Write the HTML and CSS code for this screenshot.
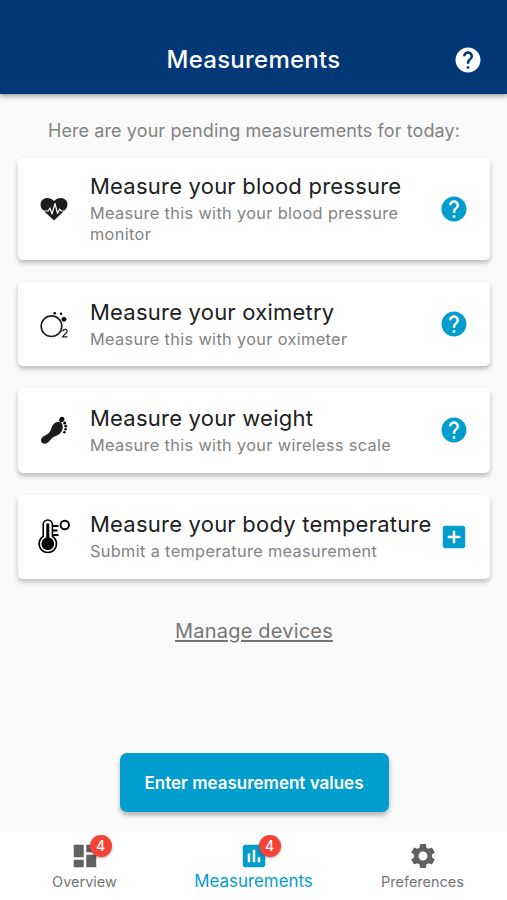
FILE: index.html
```html
<!DOCTYPE html>
<html lang="en">
<head>
  <meta charset="UTF-8">
  <meta name="viewport" content="width=device-width, initial-scale=1.0">
  <title>Measurements</title>
  <link rel="stylesheet" href="styles.css">
</head>
<body>

<!-- shared icons -->
<svg class="symbols" width="0" height="0">
  <symbol id="help" viewBox="0 0 24 24">
    <path d="M12 2C6.48 2 2 6.48 2 12s4.480 10 10 10 10-4.480 10-10S17.520 2 12 2zm1 17h-2v-2h2v2zm2.070-7.750l-.9.920C13.450 12.900 13 13.500 13 15h-2v-.5c0-1.100.45-2.100 1.170-2.830l1.240-1.260c.37-.36.59-.86.59-1.410 0-1.100-.9-2-2-2s-2 .9-2 2H8c0-2.210 1.790-4 4-4s4 1.790 4 4c0 .88-.36 1.680-.93 2.250z"/>
  </symbol>
</svg>

<header>
  <h1>Measurements</h1>
  <svg class="icon"><use href="#help"/></svg>
</header>

<main>
  <p class="intro">Here are your pending measurements for today:</p>

  <div class="cards">
    <div class="card">
      <svg class="type" viewBox="0 0 36 36">
        <path fill="#1c1c1c" d="M18 29.500L6.800 19C3.500 15.300 4 10.500 7.200 8.300c3.500-2.400 8-1.200 10.800 1.700 2.800-2.900 7.300-4.100 10.800-1.700 3.200 2.200 3.700 7 .4 10.700z"/>
        <path fill="none" stroke="#fff" stroke-width="1.200" stroke-linejoin="round" d="M5 20h7l2-3 2 6 3-10.500 2.500 10 2.200-4.500 1.500 2H31"/>
      </svg>
      <div class="text">
        <h2>Measure your blood pressure</h2>
        <p>Measure this with your blood pressure monitor</p>
      </div>
      <svg class="icon"><use href="#help"/></svg>
    </div>

    <div class="card">
      <svg class="type" viewBox="0 0 36 36">
        <circle cx="15.500" cy="20.200" r="10.300" fill="none" stroke="#222" stroke-width="1.700"/>
        <circle cx="18.700" cy="7.200" r="1.300"/>
        <circle cx="25" cy="7.700" r="1.200"/>
        <circle cx="28" cy="13.300" r="2.400"/>
        <path fill="none" stroke="#222" stroke-width="1.300" d="M26.800 25.500c.2-3 4.500-2.800 4.300 0-.1 1.700-3.700 3.700-4.500 5.300h5"/>
      </svg>
      <div class="text">
        <h2>Measure your oximetry</h2>
        <p>Measure this with your oximeter</p>
      </div>
      <svg class="icon"><use href="#help"/></svg>
    </div>

    <div class="card">
      <svg class="type" viewBox="0 0 36 36">
        <path fill="#1c1c1c" d="M5.700 26c1.500-2.400 5-2.800 7.600-5.600 2-2.200 1.800-5.400 4-8 2.500-3 6.500-3.400 8.400-1.200 2.200 3 .8 7.900-1.800 10.400-2.200 2.200-6 2.700-8.300 5-1.800 1.700-3.100 4.700-6.200 5.100-4 .3-5.400-2.900-3.700-5.700z"/>
        <ellipse cx="25.800" cy="7.500" rx="2.500" ry="2.800" transform="rotate(25 25.800 7.500)"/>
        <circle cx="28.700" cy="11" r="1.500"/>
        <circle cx="29.700" cy="14.200" r="1.400"/>
        <circle cx="29.600" cy="17.300" r="1.300"/>
        <circle cx="28.400" cy="20.200" r="1.200"/>
      </svg>
      <div class="text">
        <h2>Measure your weight</h2>
        <p>Measure this with your wireless scale</p>
      </div>
      <svg class="icon"><use href="#help"/></svg>
    </div>

    <div class="card">
      <svg class="type" viewBox="0 0 36 36">
        <path fill="none" stroke="#000" stroke-width="1.600" d="M7.200 17.400V5.600a4.600 4.600 0 0 1 9.200 0v11.800a8.700 8.700 0 1 1-9.200 0z"/>
        <circle cx="11.800" cy="24.700" r="6.400"/>
        <path stroke="#000" stroke-width="3" stroke-linecap="round" d="M11.800 5.800V22"/>
        <path stroke="#000" stroke-width="1.800" d="M17 7h5.500M17 11.500h4.500M17 16h5.500"/>
        <circle cx="28.800" cy="6" r="4.200" fill="none" stroke="#000" stroke-width="1.900"/>
      </svg>
      <div class="text">
        <h2>Measure your body temperature</h2>
        <p>Submit a temperature measurement</p>
      </div>
      <svg class="icon" viewBox="0 0 24 24">
        <path d="M19 3H5c-1.110 0-2 .9-2 2v14c0 1.100.89 2 2 2h14c1.100 0 2-.9 2-2V5c0-1.100-.9-2-2-2zm-2 10h-4v4h-2v-4H7v-2h4V7h2v4h4v2z"/>
      </svg>
    </div>
  </div>

  <a class="manage">Manage devices</a>
  <button class="enter">Enter measurement values</button>
</main>

<nav>
  <div class="tab">
    <div class="tab-icon">
      <svg class="icon" viewBox="0 0 24 24"><path d="M3 13h8V3H3v10zm0 8h8v-6H3v6zm10 0h8V11h-8v10zm0-18v6h8V3h-8z"/></svg>
      <span class="badge">4</span>
    </div>
    <span>Overview</span>
  </div>
  <div class="tab active">
    <div class="tab-icon">
      <svg class="icon" viewBox="0 0 24 24"><path d="M19 3H5c-1.100 0-2 .9-2 2v14c0 1.100.9 2 2 2h14c1.100 0 2-.9 2-2V5c0-1.100-.9-2-2-2zM9 17H7v-7h2v7zm4 0h-2V7h2v10zm4 0h-2v-4h2v4z"/></svg>
      <span class="badge">4</span>
    </div>
    <span>Measurements</span>
  </div>
  <div class="tab">
    <div class="tab-icon">
      <svg class="icon" viewBox="0 0 24 24"><path d="M19.140 12.940c.04-.3.06-.61.06-.94 0-.32-.02-.64-.07-.94l2.030-1.580c.18-.14.23-.41.12-.61l-1.920-3.320c-.12-.22-.37-.29-.59-.22l-2.390.96c-.5-.38-1.030-.7-1.620-.94l-.36-2.540c-.04-.24-.24-.41-.48-.41h-3.840c-.24 0-.43.17-.47.41l-.36 2.540c-.59.24-1.130.57-1.620.94l-2.390-.96c-.22-.08-.47 0-.59.22L2.740 8.870c-.12.21-.08.47.12.61l2.030 1.580c-.05.3-.09.63-.09.94s.02.64.07.94l-2.030 1.580c-.18.14-.23.41-.12.61l1.920 3.320c.12.22.37.29.59.22l2.390-.96c.5.38 1.030.7 1.620.94l.36 2.540c.05.24.24.41.48.41h3.840c.24 0 .44-.17.47-.41l.36-2.540c.59-.24 1.130-.56 1.620-.94l2.390.96c.22.08.47 0 .59-.22l1.920-3.320c.12-.22.07-.47-.12-.61l-2.010-1.580zM12 15.600c-1.980 0-3.600-1.620-3.600-3.600s1.620-3.600 3.600-3.600 3.600 1.620 3.600 3.600-1.620 3.600-3.600 3.600z"/></svg>
    </div>
    <span>Preferences</span>
  </div>
</nav>

</body>
</html>
```
FILE: styles.css
```css
* {
  box-sizing: border-box;
}

body {
  font-family: Inter, Roboto, sans-serif;
  margin: 0;
  height: 900px;
  display: flex;
  flex-direction: column;
  background-color: #fafafa;
  color: #212121;
}

h1, h2, p {
  margin: 0;
}

.symbols {
  position: absolute;
}

.icon {
  display: block;
  width: 30px;
  height: 30px;
  flex-shrink: 0;
  fill: currentColor;
}

header {
  display: grid;
  grid-template-columns: 30px 1fr 30px;
  align-items: center;
  height: 94px;
  padding: 25px 24px 0;
  background-color: #023778;
  color: white;
  box-shadow: 0 2px 5px rgba(0, 0, 0, 0.4);
}

header h1 {
  grid-column: 2;
  text-align: center;
  font-size: 24px;
  font-weight: 500;
  letter-spacing: 0.25px;
}

main {
  flex: 1;
  display: flex;
  flex-direction: column;
  align-items: center;
  padding: 25px 17px 20px 18px;
}

.intro {
  font-size: 18px;
  line-height: 24px;
  letter-spacing: 0.1px;
  color: #828282;
}

.cards {
  align-self: stretch;
  display: flex;
  flex-direction: column;
  gap: 22px;
  margin-top: 15px;
}

.card {
  display: flex;
  align-items: center;
  min-height: 84.3px;
  padding: 0 21px 0 18px;
  background-color: white;
  border-radius: 5px;
  box-shadow: 0 3px 5px rgba(0, 0, 0, 0.25);
}

.card:first-child {
  min-height: 102px;
}

.card .icon {
  color: #019dce;
}

.type {
  width: 36px;
  height: 36px;
  flex-shrink: 0;
}

.text {
  flex: 1;
  margin-left: 18px;
  padding-bottom: 2px;
  white-space: nowrap;
}

.card:first-child p {
  width: 325px;
  white-space: normal;
}

.text h2 {
  font-size: 22px;
  font-weight: 400;
  line-height: 30px;
  letter-spacing: 0.22px;
}

.text p {
  font-size: 16.3px;
  line-height: 21px;
  letter-spacing: 0.36px;
  color: #828282;
  padding-top: 2px;
}

.manage {
  margin-top: 39px;
  font-size: 20px;
  line-height: 26px;
  letter-spacing: 0.2px;
  color: #757575;
  text-decoration: underline;
  text-decoration-thickness: 1.5px;
  text-underline-offset: 2px;
}

.enter {
  width: 269px;
  height: 59px;
  margin-top: auto;
  border: none;
  border-radius: 7px;
  background-color: #019dce;
  color: white;
  font-family: inherit;
  font-size: 17px;
  font-weight: 600;
  white-space: nowrap;
  box-shadow: 0 3px 5px rgba(0, 0, 0, 0.3);
}

nav {
  display: flex;
  height: 68px;
  background-color: white;
}

.tab {
  flex: 1;
  display: flex;
  flex-direction: column;
  align-items: center;
  padding-top: 9px;
  font-size: 14.5px;
  line-height: 20px;
  color: #757575;
}

.tab .icon {
  color: #616161;
}

.tab.active {
  font-size: 16.9px;
  line-height: 18px;
}

.tab.active,
.tab.active .icon {
  color: #019dce;
}

.tab-icon {
  position: relative;
  height: 31px;
}

.badge {
  position: absolute;
  top: -6px;
  left: 20px;
  width: 22px;
  height: 22px;
  border-radius: 50%;
  background-color: #f44336;
  color: white;
  font-size: 14px;
  font-weight: 500;
  line-height: 22px;
  text-align: center;
  box-shadow: 0 1px 3px rgba(0, 0, 0, 0.35);
}
```
